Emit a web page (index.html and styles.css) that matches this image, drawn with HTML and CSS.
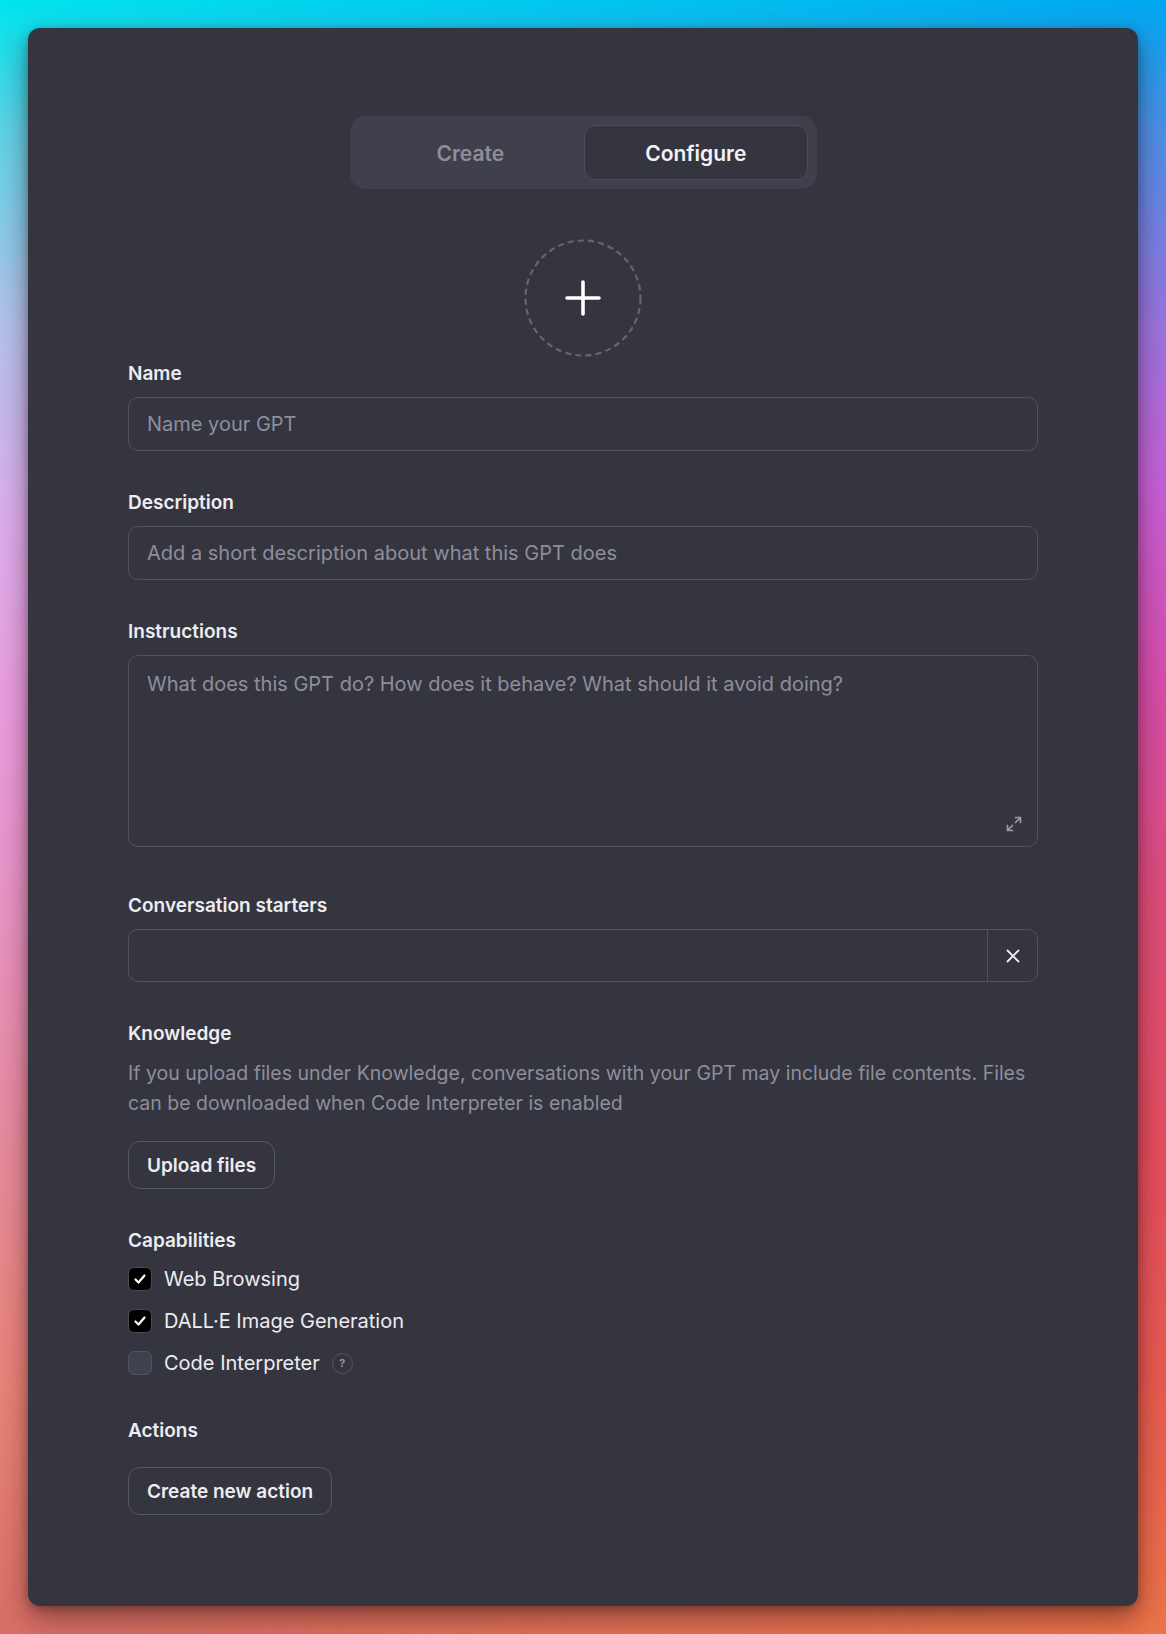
FILE: index.html
```html
<!DOCTYPE html>
<html lang="en">
<head>
<meta charset="utf-8">
<title>Configure GPT</title>
<link rel="stylesheet" href="styles.css">
</head>
<body>
<div class="backdrop"></div>
<main class="card">
  <div class="tabs">
    <button class="tab">Create</button>
    <button class="tab active">Configure</button>
  </div>

  <div class="avatar-wrap">
    <div class="avatar">
      <svg width="118" height="118" viewBox="0 0 118 118" class="dash">
        <circle cx="59" cy="59" r="57.5" fill="none" stroke="#64656f" stroke-width="2.2" stroke-dasharray="6.2 4"/>
      </svg>
      <svg width="36" height="36" viewBox="0 0 36 36" class="plus">
        <path d="M18 2v32M2 18h32" stroke="#ffffff" stroke-width="3.6" stroke-linecap="round"/>
      </svg>
    </div>
  </div>

  <section class="field">
    <div class="label">Name</div>
    <div class="input"><span class="ph">Name your GPT</span></div>
  </section>

  <section class="field">
    <div class="label">Description</div>
    <div class="input"><span class="ph">Add a short description about what this GPT does</span></div>
  </section>

  <section class="field field-tall">
    <div class="label">Instructions</div>
    <div class="textarea">
      <span class="ph">What does this GPT do? How does it behave? What should it avoid doing?</span>
      <svg class="expand" width="16" height="16" viewBox="0 0 16 16">
        <path d="M9.5 1.5h5v5M14.5 1.5L9.5 6.5M6.5 14.5h-5v-5M1.5 14.5l5-5" fill="none" stroke="#9b9ba6" stroke-width="1.7" stroke-linecap="round" stroke-linejoin="round"/>
      </svg>
    </div>
  </section>

  <section class="field">
    <div class="label">Conversation starters</div>
    <div class="input split">
      <div class="split-main"></div>
      <div class="split-btn">
        <svg width="14" height="14" viewBox="0 0 14 14">
          <path d="M1.5 1.5l11 11M12.5 1.5l-11 11" stroke="#ececf1" stroke-width="1.8" stroke-linecap="round"/>
        </svg>
      </div>
    </div>
  </section>

  <section class="field">
    <div class="label">Knowledge</div>
    <p class="help">If you upload files under Knowledge, conversations with your GPT may include file contents. Files can be downloaded when Code Interpreter is enabled</p>
    <button class="btn">Upload files</button>
  </section>

  <section class="field">
    <div class="label label-caps">Capabilities</div>
    <div class="caps">
      <label class="cap"><span class="box checked"><svg width="14" height="14" viewBox="0 0 14 14"><path d="M2.5 7.5l3 3 6-7" fill="none" stroke="#fff" stroke-width="2.2" stroke-linecap="round" stroke-linejoin="round"/></svg></span>Web Browsing</label>
      <label class="cap"><span class="box checked"><svg width="14" height="14" viewBox="0 0 14 14"><path d="M2.5 7.5l3 3 6-7" fill="none" stroke="#fff" stroke-width="2.2" stroke-linecap="round" stroke-linejoin="round"/></svg></span>DALL·E Image Generation</label>
      <label class="cap"><span class="box"></span>Code Interpreter<span class="qmark">?</span></label>
    </div>
  </section>

  <section class="field field-actions">
    <div class="label label-actions">Actions</div>
    <button class="btn">Create new action</button>
  </section>
</main>
</body>
</html>
```

FILE: styles.css
```css
* { box-sizing: border-box; }

html, body {
  height: 100%;
  margin: 0;
}

body {
  padding: 28px;
  font-family: Inter, "Noto Sans", "Liberation Sans", sans-serif;
  color: #ececf1;
  position: relative;
  overflow: hidden;
  background: linear-gradient(to bottom,
    #00e4ee 0%,
    #5fd2e6 8%,
    #b5c2ea 20%,
    #dcaeea 32%,
    #e89ee2 42%,
    #e894c6 55%,
    #e68ca2 68%,
    #e88478 85%,
    #d87068 100%);
}

.backdrop {
  position: absolute;
  inset: 0;
  z-index: 0;
  background: linear-gradient(to bottom,
    #00a6f0 0%,
    #4c8ee6 8%,
    #9a72de 20%,
    #c55ed6 30%,
    #d64caa 42%,
    #de4c7a 55%,
    #e44c5e 70%,
    #e85a50 85%,
    #ec7448 100%);
  -webkit-mask-image: linear-gradient(to right, transparent 0%, rgba(0,0,0,0.4) 40%, #000 100%);
  mask-image: linear-gradient(to right, transparent 0%, rgba(0,0,0,0.4) 40%, #000 100%);
}

.card {
  position: relative;
  z-index: 1;
  height: 100%;
  background: #353540;
  border-radius: 12px;
  box-shadow: 0 12px 28px rgba(40, 10, 10, 0.45), 0 2px 8px rgba(0,0,0,0.25);
  padding: 88px 100px 0 100px;
  display: flex;
  flex-direction: column;
}

.tabs {
  align-self: center;
  width: 467px;
  height: 73px;
  padding: 9px;
  background: #3f404c;
  border-radius: 16px;
  display: grid;
  grid-template-columns: 1fr 1fr;
  gap: 2px;
}

.tab {
  font-family: inherit;
  font-size: 21px;
  font-weight: 600;
  color: #8e8e99;
  background: transparent;
  border: 1px solid transparent;
  border-radius: 11px;
  padding: 0;
  line-height: 1;
  padding-top: 2px;
}

.tab.active {
  color: #f2f2f5;
  background: #353540;
  border-color: #4a4b57;
}

.avatar-wrap {
  display: flex;
  justify-content: center;
  margin-top: 50px;
}

.avatar {
  position: relative;
  width: 118px;
  height: 118px;
  display: flex;
  align-items: center;
  justify-content: center;
}

.avatar .dash {
  position: absolute;
  inset: 0;
}

.field {
  margin-top: 40px;
  display: flex;
  flex-direction: column;
  align-items: flex-start;
}

.avatar-wrap + .field { margin-top: 5px; }

.field-tall + .field { margin-top: 47px; }

.field-actions { margin-top: 44px; }

.label {
  font-size: 19px;
  line-height: 24px;
  font-weight: 600;
  color: #ececf1;
  margin-bottom: 11px;
}

.label-caps { margin-bottom: 14px; }
.label-actions { margin-bottom: 24px; }

.input, .textarea {
  width: 100%;
  border: 1px solid #51525e;
  border-radius: 10px;
  background: #353540;
}

.input {
  height: 54px;
  padding: 0 18px;
  display: flex;
  align-items: center;
}

.textarea {
  position: relative;
  height: 192px;
  padding: 15px 18px;
}

.ph {
  font-size: 20px;
  line-height: 26px;
  color: #8e8e9c;
}

.expand {
  position: absolute;
  right: 15px;
  bottom: 14px;
}

.input.split {
  padding: 0;
  height: 53px;
  align-items: stretch;
}

.split-main { flex: 1; }

.split-btn {
  width: 50px;
  border-left: 1px solid #51525e;
  display: flex;
  align-items: center;
  justify-content: center;
}

.help {
  margin: 1px 0 0 0;
  font-size: 19.5px;
  line-height: 30px;
  color: #8e8e9c;
  max-width: 910px;
}

.btn {
  font-family: inherit;
  margin-top: 23px;
  height: 48px;
  padding: 0 18px;
  font-size: 19px;
  font-weight: 600;
  color: #ececf1;
  background: transparent;
  border: 1px solid #585967;
  border-radius: 12px;
}

.label-actions + .btn { margin-top: 0; }

.caps {
  display: flex;
  flex-direction: column;
  gap: 18px;
}

.cap {
  display: flex;
  align-items: center;
  height: 24px;
  font-size: 20px;
  color: #ececf1;
}

.box {
  width: 24px;
  height: 24px;
  border-radius: 6px;
  border: 1px solid #51525e;
  background: #40414e;
  margin-right: 12px;
  display: flex;
  align-items: center;
  justify-content: center;
}

.box.checked {
  background: #000;
  border-color: #4a4b56;
}

.qmark {
  margin-left: 12px;
  width: 21px;
  height: 21px;
  border-radius: 50%;
  border: 1px solid #55565f;
  font-size: 11px;
  font-weight: 600;
  color: #9a9aa5;
  display: flex;
  align-items: center;
  justify-content: center;
}
```
